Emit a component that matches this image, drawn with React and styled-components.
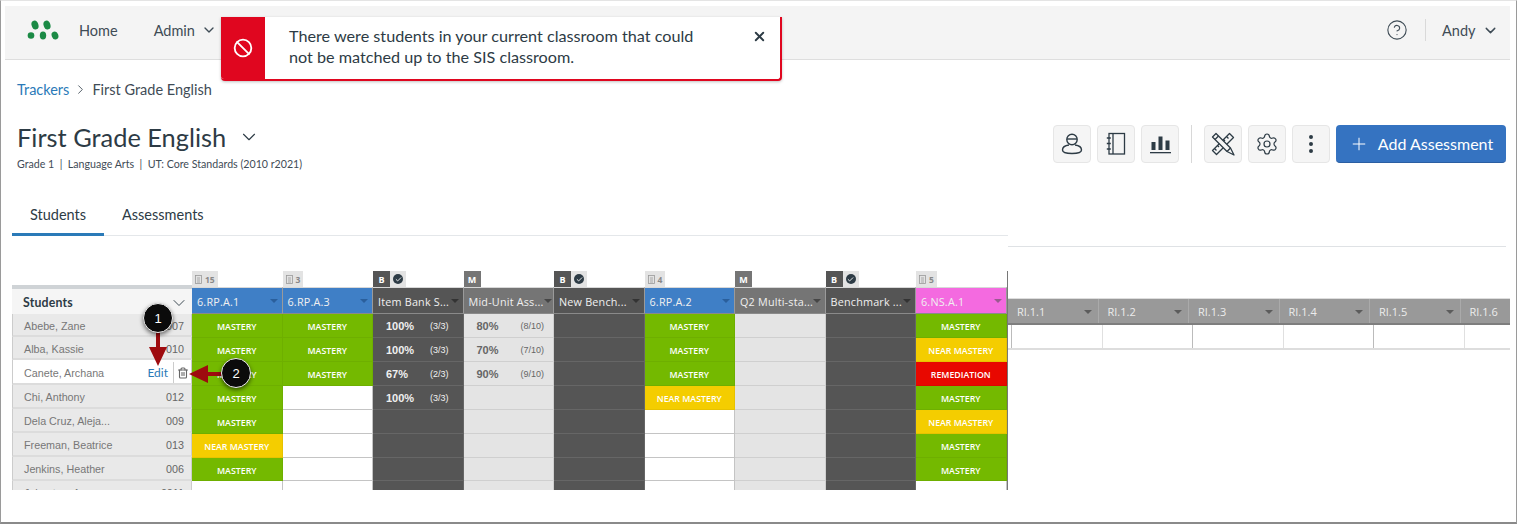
import React from "react";
import styled, { createGlobalStyle } from "styled-components";
import { Settings, EllipsisVertical, Plus, ChevronDown, ChevronRight, Trash2, X, Ban, CircleHelp, Check } from "lucide-react";

const Global = createGlobalStyle`
  html, body { margin: 0; padding: 0; background: #fff; }
  body { width: 1518px; height: 526px; overflow: hidden; font-family: Lato, "Liberation Sans", sans-serif; color: #2d3b45; }
  * { box-sizing: border-box; }
`;
const Frame = styled.div`
  position: relative; width: 1517px; height: 524px; background: #fff; overflow: hidden;
  border: 1px solid #9a9a9a; border-top-color: #e4e4e4; border-bottom: 2px solid #8a8a8a;
  padding: 5px 6px 0 4px;
`;
const Nav = styled.nav`
  height: 54px; background: #f4f4f4; border-bottom: 1px solid #dedede;
  display: flex; align-items: center; padding: 0 11.5px 5px 22px; font-size: 14.5px; color: #3f4c56;
`;
const NavLink = styled.span`display: inline-flex; align-items: center; gap: 6px; margin-left: ${p => p.$gap}px;`;
const NavRight = styled.div`margin-left: auto; display: flex; align-items: center;`;
const NavSep = styled.span`width: 1px; height: 22px; background: #d9d9d9; margin: 0 16px 0 17px;`;
const Main = styled.main`padding: 0 4px 0 7px;`;
const Crumbs = styled.div`
  height: 20px; margin: 19px 0 0 5px; display: flex; align-items: center; font-size: 14.5px; gap: 4px; color: #3f4c56;
`;
const CrumbLink = styled.span`color: #2a7ab8;`;
const Head = styled.div`display: flex; justify-content: space-between; align-items: flex-start; margin-top: 20px; padding: 0 0 0 5px;`;
const TitleRow = styled.div`display: flex; align-items: center; gap: 12px; height: 36px; font-size: 25.4px; font-weight: 400; color: #2d3b45;`;
const Sub = styled.div`font-size: 10.65px; color: #3f4c56; line-height: 14px; margin-top: 2px;`;
const Tools = styled.div`display: flex; gap: 6px; align-items: center; margin-top: 6px;`;
const ToolBtn = styled.button`
  width: 38px; height: 38px; padding: 0; background: #f5f5f5; border: 1px solid #e6e6e6; border-radius: 4px;
  display: flex; align-items: center; justify-content: center; color: #2d3b45;
`;
const ToolSep = styled.span`width: 1px; height: 38px; background: #d8d8d8; margin: 0 6px;`;
const AddBtn = styled.button`
  width: 170px; height: 38px; background: #3573c1; border: 0; border-bottom: 1px solid #2a5ea2; border-radius: 4px;
  color: #fff; font: 400 16px Lato, sans-serif;
  display: flex; align-items: center; justify-content: center; gap: 9px;
`;
const TabBar = styled.div`display: flex; align-items: flex-end; margin-top: 26px; height: 39px;`;
const Tabs = styled.div`display: flex; height: 39px; flex: 0 0 996px; border-bottom: 1px solid #e4e7ea;`;
const TabRule = styled.div`flex: 1; height: 1px; background: #dfe2e5; margin-bottom: -11px;`;
const Tab = styled.div`
  padding: 0 18px; display: flex; align-items: center; font-size: 14.5px; color: #2d3b45; height: 39px;
  border-bottom: ${p => p.$active ? "3px solid #2a7ab8" : "0"};
  width: ${p => p.$active ? "92px" : "auto"};
  padding-bottom: ${p => p.$active ? "2px" : "5px"};
`;
const TableArea = styled.div`display: flex; align-items: flex-start; margin-top: 35px; width: 1498px;`;
const Frozen = styled.div`display: flex; height: 219px; overflow: hidden; flex: 0 0 996px; border-right: 1px solid #777;`;
const Extra = styled.div`flex: 1; min-width: 0; overflow: hidden; margin-top: 27px;`;
const ExtraHeads = styled.div`display: flex; height: 27px; background: #999; border-top: 1px solid #ddd; border-bottom: 2px solid #7e7e7e; width: 502px;`;
const ExtraHead = styled.div`
  flex: 0 0 90.5px; display: flex; align-items: center; justify-content: space-between; padding: 1px 6px 0 9px;
  font: 400 11px "Open Sans", sans-serif; color: #ececec; border-right: 1px solid #aaa;
`;
const ExtraRow = styled.div`display: flex; height: 25px; padding-left: 3px; border-bottom: 2px solid #ddd; width: 502px;`;
const ExtraCell = styled.div`flex: 0 0 90.5px; border-left: 1px solid ${p => p.$dark ? "#bbb" : "#e0e0e0"};`;
const StudentCol = styled.div`width: 180px; flex: 0 0 180px; display: flex; flex-direction: column;`;
const StudentTopBar = styled.div`height: 4px; flex: none; margin-top: 14px; background: #cfd3d6;`;
const StudentHead = styled.div`
  height: 25px; flex: none; background: #f5f5f5; display: flex; align-items: center; justify-content: space-between;
  padding: 2px 3px 0 11px; font: 700 12.3px Lato, sans-serif; letter-spacing: .2px; color: #2d3b45;
`;
const StudentRow = styled.div`
  height: ${p => p.$h}px; flex: none; display: flex; align-items: center; justify-content: space-between; padding: 2px 7px 0 11px;
  background: ${p => p.$active ? "#fff" : "#e9e9e9"}; font: 400 10.75px "Liberation Sans", sans-serif; color: #777;
  border-bottom: 2px solid #dcdcdc; border-left: 1px solid #ccc; border-right: 1px solid #ccc;
`;
const RowNum = styled.span`color: #666;`;
const EditPair = styled.div`display: flex; align-items: center; height: 100%; margin-right: -7px;`;
const EditLink = styled.span`color: #2a7ab8; font: 400 12px Lato, sans-serif; padding-right: 5px;`;
const TrashBox = styled.span`border-left: 1px solid #ccc; height: 100%; width: 18px; display: flex; align-items: center; justify-content: center; color: #666;`;
const Col = styled.div`flex: 0 0 90.5px; width: 90.5px; display: flex; flex-direction: column;`;
const TagRow = styled.div`height: 16px; flex: none; display: flex;`;
const LightTag = styled.span`
  height: 16px; padding: 0 3px; background: #e3e3e3; font: 700 8.5px "Open Sans", sans-serif; color: #888;
  display: inline-flex; align-items: center; gap: 3px;
`;
const DarkTag = styled.span`
  height: 16px; width: 17px; background: ${p => p.$bg}; color: #fff; font: 700 9px "Open Sans", sans-serif;
  display: inline-flex; align-items: center; justify-content: center;
`;
const CheckTag = styled.span`height: 16px; width: 16px; background: #e3e3e3; display: inline-flex; align-items: center; justify-content: center;`;
const CheckDot = styled.span`width: 10px; height: 10px; border-radius: 50%; background: #2d3b45; color: #fff; display: inline-flex; align-items: center; justify-content: center;`;
const ColHead = styled.div`
  height: 27px; flex: none; background: ${p => p.$bg}; display: flex; align-items: center; justify-content: space-between;
  padding: 1px 4px 0 5px; font: 400 10.8px "Open Sans", sans-serif; color: #f0f0f0; letter-spacing: .2px;
  border-right: 1px solid #9a9a9a; border-top: 1px solid #d8d8d8; border-bottom: 1px solid #8a8a8a;
  white-space: nowrap;
`;
const Caret = styled.span`
  width: 0; height: 0; border-left: 4px solid transparent; border-right: 4px solid transparent;
  border-top: 4px solid ${p => p.$c || "rgba(0,0,0,.4)"}; flex: none;
`;
const Cell = styled.div`
  height: ${p => p.$h}px; flex: none; background: ${p => p.$bg}; color: #fff; display: flex; align-items: center; justify-content: center;
  font: 600 8.8px "Open Sans", sans-serif; padding-top: 3px;
  border-right: 1px solid ${p => p.$line}; border-bottom: 1px solid ${p => p.$line};
`;
const ScoreCell = styled(Cell)`
  justify-content: flex-start; padding: 0 0 0 13px; color: ${p => p.$fg}; font: 400 9px "Liberation Sans", sans-serif;
`;
const Pct = styled.b`font: 700 11px "Liberation Sans", sans-serif; width: 44px;`;
const Alert = styled.div`
  position: absolute; left: 220px; top: 16px; width: 561px; height: 64px; display: flex; background: #fff;
  border: 2px solid #e0061f; border-top: 0; border-left: 0; border-radius: 0 0 4px 4px;
  box-shadow: 0 1px 3px rgba(0,0,0,.25);
`;
const AlertIcon = styled.div`width: 44px; flex: none; background: #e0061f; display: flex; align-items: center; justify-content: center; color: #fff; border-radius: 0 0 0 3px;`;
const AlertText = styled.div`padding: 8px 45px 0 24px; width: 487px; font-size: 16.2px; line-height: 21px; color: #2d3b45;`;
const AlertClose = styled.div`padding: 11px 0 0 0; color: #2d3b45;`;
const Callout = styled.div`
  position: absolute; left: ${p => p.$x - 15}px; top: ${p => p.$y - 15}px; width: 30px; height: 30px; border-radius: 50%;
  background: #0b0b0b; border: 1px solid #eee; color: #fff; font: 400 13px "Liberation Sans", sans-serif;
  display: flex; align-items: center; justify-content: center; box-shadow: 0 2px 4px rgba(0,0,0,.55);
`;
const ArrowSvg = styled.svg`position: absolute; left: 0; top: 0; pointer-events: none;`;

const Logo = () => (
  <svg width="33" height="22" viewBox="0 0 33 22" fill="#1b8a45">
    <ellipse cx="8" cy="6" rx="3.4" ry="4.6" transform="rotate(-18 8 6)" />
    <ellipse cx="20" cy="6" rx="3.4" ry="4.6" transform="rotate(-18 20 6)" />
    <circle cx="4" cy="16.5" r="3.3" />
    <ellipse cx="16" cy="16.5" rx="3.2" ry="3.9" />
    <ellipse cx="28" cy="16.5" rx="3.3" ry="4" transform="rotate(-22 28 16.5)" />
  </svg>
);
const UserIcon = () => (
  <svg width="22" height="24" viewBox="0 0 22 24" fill="none" stroke="#2d3b45" strokeWidth="1.4">
    <circle cx="11" cy="7.5" r="5.2" />
    <path d="M6 7h10" />
    <path d="M8 13c-4 .5-6.500 2.500-6.500 5 0 2.500 3 3.500 9.500 3.500s9.500-1 9.500-3.500c0-2.500-2.500-4.500-6.500-5" />
  </svg>
);
const BookIcon = () => (
  <svg width="20" height="24" viewBox="0 0 20 24" fill="none" stroke="#2d3b45" strokeWidth="1.3">
    <rect x="3" y="1.500" width="15.500" height="20.500" />
    <path d="M7 1.500v20.500" />
    <path d="M.8 6h4M.8 11.500h4M.8 17h4" />
  </svg>
);
const BarsIcon = () => (
  <svg width="21" height="20" viewBox="0 0 21 20" fill="#2d3b45">
    <rect x="1.500" y="8" width="4" height="8" /><rect x="8.500" y="2.500" width="4" height="13.500" /><rect x="15.500" y="6.500" width="4" height="9.500" />
    <rect x="0" y="18" width="21" height="1.300" />
  </svg>
);
const ToolsIcon = () => (
  <svg width="24" height="24" viewBox="0 0 24 24" fill="#f5f5f5" stroke="#2d3b45" strokeWidth="1.3" strokeLinejoin="round">
    <path d="M18.500 1.500L22.500 5.500L5.500 22.500L1.500 18.500Z" />
    <path d="M15.500 4.500l2 2M12.500 7.500l1.500 1.500M9.500 10.500l2 2M6.500 13.500l1.500 1.500M3.500 16.500l2 2" />
    <path d="M1.500 5L5 1.500L19.500 16L23 23L16 19.500Z" />
    <path d="M16 19.500l3.500-3.500M4 7.500l3.500-3.500" />
  </svg>
);
const DocTag = () => (
  <svg width="7" height="9" viewBox="0 0 7 9" fill="none" stroke="#9a9a9a" strokeWidth=".8">
    <rect x=".5" y=".5" width="6" height="8" /><path d="M2 3h3M2 5h3M2 7h3" />
  </svg>
);

const M = "MASTERY", N = "NEAR MASTERY", R = "REMEDIATION";
const HEIGHTS = [24, 24, 24, 24, 24, 24, 23, 24];
const SKILL = { [M]: "#74b900", [N]: "#f4cd00", [R]: "#e80800" };
const columns = [
  { name: "6.RP.A.1", bg: "#3f7fc6", tag: "15", marks: [M, M, M, M, M, N, M, ""] },
  { name: "6.RP.A.3", bg: "#3f7fc6", tag: "3", marks: [M, M, M, "", "", "", "", ""] },
  { name: "Item Bank S...", bg: "#555", badge: "B", scores: [["100%", "(3/3)"], ["100%", "(3/3)"], ["67%", "(2/3)"], ["100%", "(3/3)"]] },
  { name: "Mid-Unit Ass...", bg: "#757575", badge: "M", scores: [["80%", "(8/10)"], ["70%", "(7/10)"], ["90%", "(9/10)"]] },
  { name: "New Bench...", bg: "#555", badge: "B", scores: [] },
  { name: "6.RP.A.2", bg: "#3f7fc6", tag: "4", marks: [M, M, M, N, "", "", "", ""] },
  { name: "Q2 Multi-sta...", bg: "#757575", badge: "M", scores: [] },
  { name: "Benchmark ...", bg: "#555", badge: "B", scores: [] },
  { name: "6.NS.A.1", bg: "#f46ae0", tag: "5", marks: [M, N, R, M, N, M, M, ""] },
];
const students = [
  ["Abebe, Zane", "007", 23], ["Alba, Kassie", "010", 23], ["Canete, Archana", "", 25, true], ["Chi, Anthony", "012", 24],
  ["Dela Cruz, Aleja...", "009", 24], ["Freeman, Beatrice", "013", 24], ["Jenkins, Heather", "006", 24], ["Johnston, Amy", "0011", 24],
];

function ColumnTag({ c }) {
  if (c.tag) return <TagRow><LightTag><DocTag />{c.tag}</LightTag></TagRow>;
  return (
    <TagRow>
      <DarkTag $bg={c.badge === "B" ? "#555" : "#757575"}>{c.badge}</DarkTag>
      {c.badge === "B" && <CheckTag><CheckDot><Check size={7} strokeWidth={3} /></CheckDot></CheckTag>}
    </TagRow>
  );
}
function DataCol({ c }) {
  const tint = c.bg === "#3f7fc6" ? "#2a5f9c" : c.bg === "#f46ae0" ? "#9a5a90" : undefined;
  return (
    <Col>
      <ColumnTag c={c} />
      <ColHead $bg={c.bg}>
        <span>{c.name}</span>
        <Caret $c={tint} />
      </ColHead>
      {HEIGHTS.map((h, i) => {
        if (c.marks) {
          const mk = c.marks[i];
          return <Cell key={i} $h={h} $bg={mk ? SKILL[mk] : "#fff"} $line={mk ? "rgba(0,0,0,.05)" : "#c4c4c4"}>{mk}</Cell>;
        }
        const dark = c.bg === "#555";
        const s = c.scores[i];
        return (
          <ScoreCell key={i} $h={h} $bg={dark ? "#555" : "#e4e4e4"} $fg={dark ? "#f0f0f0" : "#666"} $line={dark ? "#666" : "#cfcfcf"}>
            {s && <><Pct>{s[0]}</Pct><span>{s[1]}</span></>}
          </ScoreCell>
        );
      })}
    </Col>
  );
}

export default function App() {
  return (
    <>
      <Global />
      <Frame>
        <Nav>
          <Logo />
          <NavLink $gap={19}>Home</NavLink>
          <NavLink $gap={36}>Admin <ChevronDown size={16} /></NavLink>
          <NavRight>
            <CircleHelp size={22} strokeWidth={1.2} />
            <NavSep />
            <NavLink $gap={0}>Andy <ChevronDown size={17} /></NavLink>
          </NavRight>
        </Nav>
        <Main>
          <Crumbs><CrumbLink>Trackers</CrumbLink><ChevronRight size={15} strokeWidth={1.4} />First Grade English</Crumbs>
          <Head>
            <div>
              <TitleRow>First Grade English <ChevronDown size={22} strokeWidth={1.2} /></TitleRow>
              <Sub>Grade 1&nbsp; |&nbsp; Language Arts&nbsp; |&nbsp; UT: Core Standards (2010 r2021)</Sub>
            </div>
            <Tools>
              <ToolBtn><UserIcon /></ToolBtn>
              <ToolBtn><BookIcon /></ToolBtn>
              <ToolBtn><BarsIcon /></ToolBtn>
              <ToolSep />
              <ToolBtn><ToolsIcon /></ToolBtn>
              <ToolBtn><Settings size={24} strokeWidth={1.2} /></ToolBtn>
              <ToolBtn><EllipsisVertical size={24} strokeWidth={2} /></ToolBtn>
              <AddBtn><Plus size={20} strokeWidth={1.2} />Add Assessment</AddBtn>
            </Tools>
          </Head>
          <TabBar>
            <Tabs>
              <Tab $active>Students</Tab>
              <Tab>Assessments</Tab>
            </Tabs>
            <TabRule />
          </TabBar>
          <TableArea>
            <Frozen>
              <StudentCol>
                <StudentTopBar />
                <StudentHead>Students <ChevronDown size={20} strokeWidth={1.1} /></StudentHead>
                {students.map(([n, num, h, active]) => (
                  <StudentRow key={n} $h={h} $active={active}>
                    <span>{n}</span>
                    {active
                      ? <EditPair><EditLink>Edit</EditLink><TrashBox><Trash2 size={12} strokeWidth={2.2} /></TrashBox></EditPair>
                      : <RowNum>{num}</RowNum>}
                  </StudentRow>
                ))}
              </StudentCol>
              {columns.map(c => <DataCol key={c.name} c={c} />)}
            </Frozen>
            <Extra>
              <ExtraHeads>
                {["RI.1.1", "RI.1.2", "RI.1.3", "RI.1.4", "RI.1.5", "RI.1.6"].map(n => <ExtraHead key={n}>{n}<Caret /></ExtraHead>)}
              </ExtraHeads>
              <ExtraRow>{[0, 1, 2, 3, 4, 5].map(i => <ExtraCell key={i} $dark={i % 2 === 0} />)}</ExtraRow>
            </Extra>
          </TableArea>
        </Main>
        <Alert>
          <AlertIcon><Ban size={20} strokeWidth={2.2} /></AlertIcon>
          <AlertText>There were students in your current classroom that could not be matched up to the SIS classroom.</AlertText>
          <AlertClose><X size={15} strokeWidth={3} /></AlertClose>
        </Alert>
        <ArrowSvg width="1518" height="526">
          <path d="M155 330h4v16h7l-9 19-9-19h7z" fill="#9e0b0f" />
          <path d="M224 371v4h-17v7l-19-9 19-9v7z" fill="#9e0b0f" />
        </ArrowSvg>
        <Callout $x={157} $y={317}>1</Callout>
        <Callout $x={235} $y={372}>2</Callout>
      </Frame>
    </>
  );
}
